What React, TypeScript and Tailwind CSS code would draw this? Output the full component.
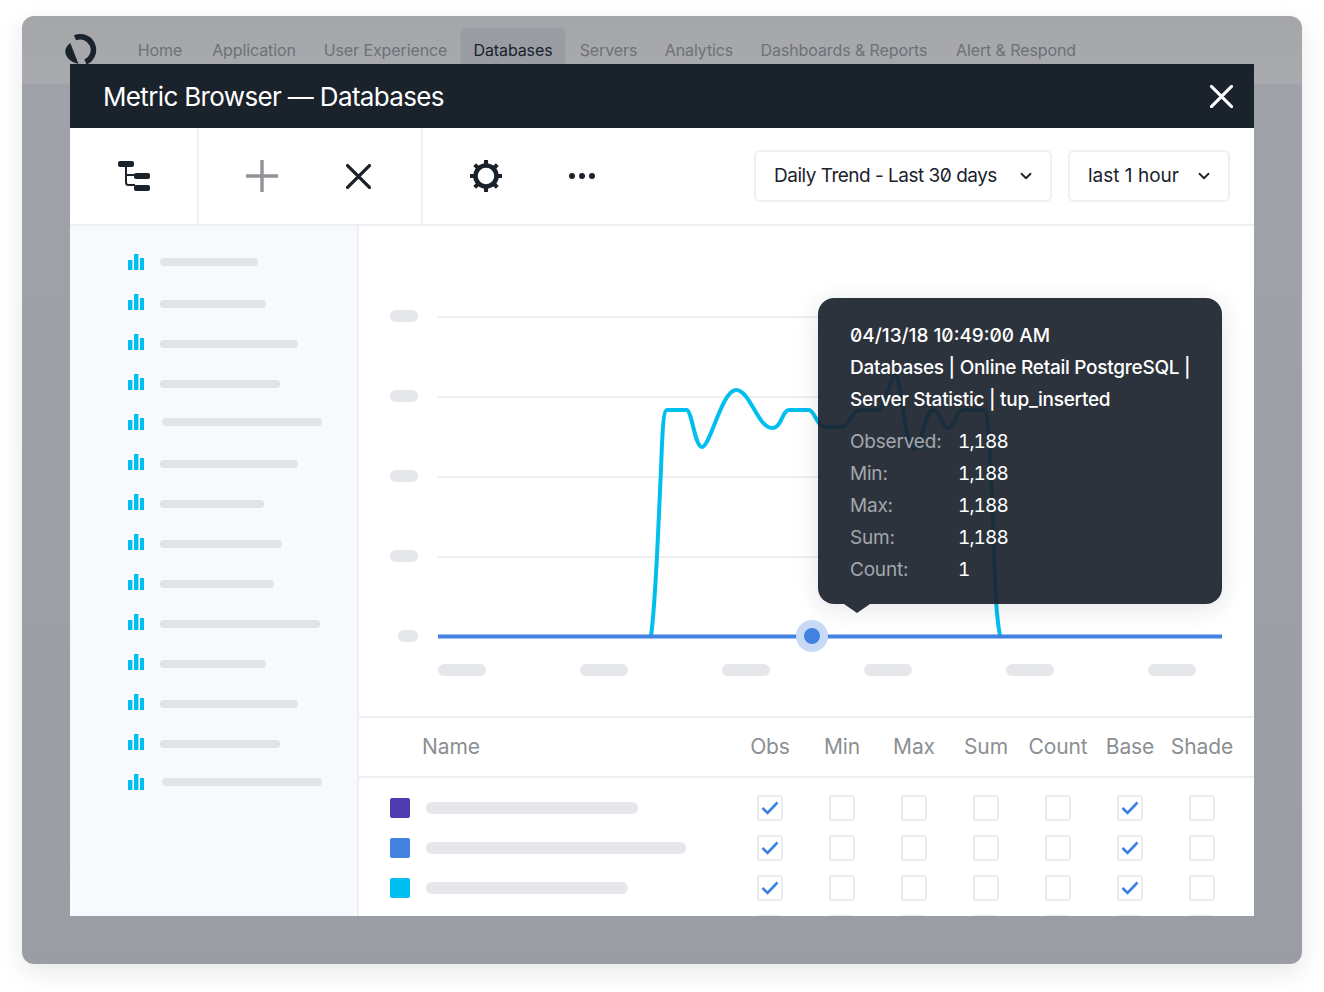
import React from 'react';
import { ChevronDown } from 'lucide-react';

const navItems = [
  { label: 'Home', width: 74 },
  { label: 'Application', width: 114 },
  { label: 'User Experience', width: 149 },
  { label: 'Databases', width: 106 },
  { label: 'Servers', width: 85 },
  { label: 'Analytics', width: 96 },
  { label: 'Dashboards & Reports', width: 194 },
  { label: 'Alert & Respond', width: 150 },
];

// width of each placeholder bar, nudged rows sit 2px lower and wide rows start 2px later
const metrics = [
  { w: 98, low: false, wide: false },
  { w: 106, low: true, wide: false },
  { w: 138, low: true, wide: false },
  { w: 120, low: true, wide: false },
  { w: 160, low: false, wide: true },
  { w: 138, low: true, wide: false },
  { w: 104, low: true, wide: false },
  { w: 122, low: true, wide: false },
  { w: 114, low: true, wide: false },
  { w: 160, low: true, wide: false },
  { w: 106, low: true, wide: false },
  { w: 138, low: true, wide: false },
  { w: 120, low: true, wide: false },
  { w: 160, low: false, wide: true },
];

const columns = ['Obs', 'Min', 'Max', 'Sum', 'Count', 'Base', 'Shade'];

const series = [
  { color: 'bg-[#4f3cb0]', w: 212 },
  { color: 'bg-[#4382e0]', w: 260 },
  { color: 'bg-[#00bfef]', w: 202 },
  { color: 'bg-white', w: 0 },
];

const stats = [
  ['Observed:', '1,188'],
  ['Min:', '1,188'],
  ['Max:', '1,188'],
  ['Sum:', '1,188'],
  ['Count:', '1'],
];

const Logo = () => (
  <svg width="34" height="31" viewBox="0 0 34 31" className="block shrink-0">
    <path d="M10 4.8 A13 13 0 0 1 20.5 29" fill="none" stroke="#1a222c" strokeWidth="5.5" />
    <path d="M5.3 10 L13.5 31 C5 29 0.3 24 0.3 18 C0.3 15 2.5 12 5.3 10 Z" fill="#1a222c" />
  </svg>
);

const TreeIcon = () => (
  <svg width="34" height="32" viewBox="0 0 34 32" fill="none">
    <path d="M9 4 V22.5 Q9 25 11.5 25 H18 M9 15 H18" stroke="#1a222c" strokeWidth="2" />
    <rect x="1" y="1" width="16" height="6" rx="2" fill="#1a222c" />
    <rect x="17" y="13" width="16" height="6" rx="2" fill="#1a222c" />
    <rect x="17" y="25" width="16" height="6" rx="2" fill="#1a222c" />
  </svg>
);

const GearIcon = () => (
  <svg width="32" height="32" viewBox="0 0 32 32" fill="none">
    <circle cx="16" cy="16" r="10.5" stroke="#1a222c" strokeWidth="4.5" />
    <path
      d="M16 0 V6 M16 26 V32 M0 16 H6 M26 16 H32 M4.7 4.7 L9 9 M23 23 L27.3 27.3 M27.3 4.7 L23 9 M9 23 L4.7 27.3"
      stroke="#1a222c"
      strokeWidth="4"
    />
  </svg>
);

const CrossIcon = ({ size, color }: { size: number; color: string }) => (
  <svg width={size} height={size} viewBox="0 0 24 24" fill="none">
    <path d="M1.5 1.5 L22.5 22.5 M22.5 1.5 L1.5 22.5" stroke={color} strokeWidth="3.2" strokeLinecap="round" />
  </svg>
);

const BarsIcon = () => (
  <svg width="16" height="16" viewBox="0 0 16 16" className="block shrink-0">
    <rect x="0" y="6" width="4.4" height="10" fill="#00bfef" />
    <rect x="6" y="0" width="4.4" height="16" fill="#00bfef" />
    <rect x="12" y="4" width="4.4" height="12" fill="#00bfef" />
  </svg>
);

const Checkbox = ({ checked }: { checked: boolean }) => (
  <div className="w-[26px] h-[26px] rounded-[3px] border-2 border-[#ebecef] bg-white flex items-center justify-center">
    {checked && (
      <svg width="18" height="14" viewBox="0 0 18 14" fill="none">
        <path d="M1.5 7 L6.5 12 L16.5 1.5" stroke="#3b80e4" strokeWidth="2.6" />
      </svg>
    )}
  </div>
);

const Select = ({ label, width, tracking }: { label: string; width: string; tracking: string }) => (
  <div className={`${width} h-[52px] rounded-md border-2 border-[#eeeff4] flex items-center justify-between pl-[18px] pr-[15px] text-[#1a222c] text-[19px] slashed-zero whitespace-nowrap`}>
    <span className={tracking}>{label}</span>
    <ChevronDown className="w-[18px] h-[18px]" strokeWidth={2.4} />
  </div>
);

const Chart = () => (
  <svg width="895" height="490" viewBox="359 226 895 490" fill="none" className="block">
    {[317, 397, 477, 557].map((y) => (
      <path key={y} d={`M438 ${y} H1222`} stroke="#eeeff3" strokeWidth="2" />
    ))}
    {[310, 390, 470, 550].map((y) => (
      <rect key={y} x="390" y={y} width="28" height="12" rx="6" fill="#e6e7eb" />
    ))}
    <rect x="398" y="630" width="20" height="12" rx="6" fill="#e6e7eb" />
    {[438, 580, 722, 864, 1006, 1148].map((x) => (
      <rect key={x} x={x} y="664" width="48" height="12" rx="6" fill="#e6e7eb" />
    ))}
    <path
      d="M651 636 C656 600 658 530 661 470 C662 440 663 410 667 410 H687 C692 412 695 447 702 447 C710 447 722 390 736 390 C750 390 758 428 772 428 C782 428 782 410 789 410 H809 C814 410 818 427 824 427 H842 C848 427 852 410 860 410 H878 C886 410 890 375 895 375 C901 375 905 449 914 449 C922 449 924 410 933 410 C940 410 942 428 948 428 C955 428 956 410 963 410 H984 C990 410 992 500 995 580 C996 610 998 625 1000 636"
      stroke="#00bfef"
      strokeWidth="4"
      strokeLinejoin="round"
    />
    <path d="M438 636.5 H1222" stroke="#4382e0" strokeWidth="4" />
    <circle cx="812" cy="636" r="16" fill="#c9daf6" />
    <circle cx="812" cy="636" r="8" fill="#4382e0" />
  </svg>
);

const Tooltip = () => (
  <div className="absolute left-[459px] top-[72px] w-[404px] h-[306px] rounded-2xl bg-[#1b222c]/92 shadow-[0_4px_24px_rgba(27,34,44,0.12)] pl-8 pt-[22px] text-[19px] leading-8">
    <div className="text-white font-medium slashed-zero">04/13/18 10:49:00 AM</div>
    <div className="text-white font-medium tracking-[-0.27px]">Databases | Online Retail PostgreSQL |</div>
    <div className="text-white font-medium tracking-[-0.27px]">Server Statistic | tup_inserted</div>
    <div className="mt-[10px]">
      {stats.map(([label, value]) => (
        <div key={label} className="flex">
          <span className="w-[108px] text-[#a2a6ab] tracking-[-0.2px]">{label}</span>
          <span className="text-white tabular-nums tracking-[-0.9px]">{value}</span>
        </div>
      ))}
    </div>
    <div className="absolute left-[26px] -bottom-[9px] w-0 h-0 border-l-[13px] border-r-[13px] border-t-[9px] border-l-transparent border-r-transparent border-t-[#2d333d]" />
  </div>
);

export default function App() {
  return (
    <div className="w-[1324px] h-[992px] bg-white pt-4 pl-[22px] font-['Inter',sans-serif] text-[20px]">
      <div className="w-[1280px] h-[948px] rounded-xl px-12 bg-[linear-gradient(#a4a6aa_0,#a8aaad_67px,#9fa2a9_68px,#9a9da4_100%)] shadow-[0_8px_24px_rgba(27,34,44,0.1)]">
        <div className="h-12 flex items-end">
          <div className="-ml-[5px] w-[58px] shrink-0">
            <Logo />
          </div>
          {navItems.map((item) => (
            <div
              key={item.label}
              className={`h-[37px] shrink-0 text-center leading-[26px] text-[16px] tracking-[-0.1px] rounded-t-md whitespace-nowrap ${
                item.label === 'Databases'
                  ? 'pt-[9px] bg-[#999ca3] text-[#1a222c] border border-b-0 border-[#a0a3a8]'
                  : 'pt-[10px] text-[#6d7177]'
              }`}
              style={{ width: item.width }}
            >
              {item.label}
            </div>
          ))}
        </div>

        <div className="h-[852px] bg-white overflow-hidden flex flex-col">
          <div className="h-16 shrink-0 bg-[#1a222c] flex items-center justify-between pl-[33px] pr-[21px]">
            <span className="text-white text-[26px] tracking-[-0.65px]">Metric Browser — Databases</span>
            <CrossIcon size={23} color="#ffffff" />
          </div>

          <div className="h-[98px] shrink-0 border-b-2 border-[#eeeff4] flex items-center">
            <div className="w-[129px] h-full border-r-2 border-[#eeeff4] flex items-center justify-center">
              <TreeIcon />
            </div>
            <div className="w-[224px] h-full border-r-2 border-[#eeeff4] flex items-center pl-[47px] gap-[68px]">
              <svg width="32" height="32" viewBox="0 0 32 32" fill="none">
                <path d="M16 0 V32 M0 16 H32" stroke="#8f9296" strokeWidth="3.4" />
              </svg>
              <CrossIcon size={25} color="#1a222c" />
            </div>
            <div className="w-[331px] h-full flex items-center pl-[47px] gap-[66px]">
              <GearIcon />
              <svg width="28" height="8" viewBox="0 0 28 8" fill="#1a222c">
                <circle cx="4" cy="4" r="3" />
                <circle cx="14" cy="4" r="3" />
                <circle cx="24" cy="4" r="3" />
              </svg>
            </div>
            <div className="flex items-center gap-4">
              <Select label="Daily Trend - Last 30 days" width="w-[298px]" tracking="tracking-[-0.5px]" />
              <Select label="last 1 hour" width="w-[162px]" tracking="tracking-normal" />
            </div>
          </div>

          <div className="flex flex-1 min-h-0">
            <div className="w-[289px] shrink-0 bg-[#f8f9fd] border-r-2 border-[#eeeff4] pt-4 pl-[58px]">
              {metrics.map((m, i) => (
                <div key={i} className={`h-10 flex items-center ${m.wide ? 'gap-[18px]' : 'gap-4'}`}>
                  <BarsIcon />
                  <div
                    className={`h-2 rounded-full bg-[#e2e4ea] ${m.low ? 'translate-y-0.5' : ''}`}
                    style={{ width: m.w }}
                  />
                </div>
              ))}
            </div>

            <div className="flex-1 min-w-0">
              <div className="relative h-[492px] border-b-2 border-[#eeeff4]">
                <Chart />
                <Tooltip />
              </div>

              <div className="h-[60px] border-b-2 border-[#eeeff4] flex items-center pl-[63px] pr-4 text-[21px] tracking-[-0.1px] text-[#8b8f94]">
                <span className="flex-1">Name</span>
                {columns.map((c) => (
                  <span key={c} className="w-[72px] text-center whitespace-nowrap">{c}</span>
                ))}
              </div>

              <div className="pt-[10px] pl-[31px] pr-4">
                {series.map((s, i) => (
                  <div key={i} className="h-10 flex items-center">
                    <div className="flex-1 flex items-center gap-4">
                      <div className={`w-5 h-5 rounded-[2px] ${s.color}`} />
                      <div className="h-3 rounded-full bg-[#e6e7eb]" style={{ width: s.w }} />
                    </div>
                    {columns.map((c) => (
                      <div key={c} className="w-[72px] flex justify-center">
                        <Checkbox checked={i < 3 && (c === 'Obs' || c === 'Base')} />
                      </div>
                    ))}
                  </div>
                ))}
              </div>
            </div>
          </div>
        </div>
      </div>
    </div>
  );
}
